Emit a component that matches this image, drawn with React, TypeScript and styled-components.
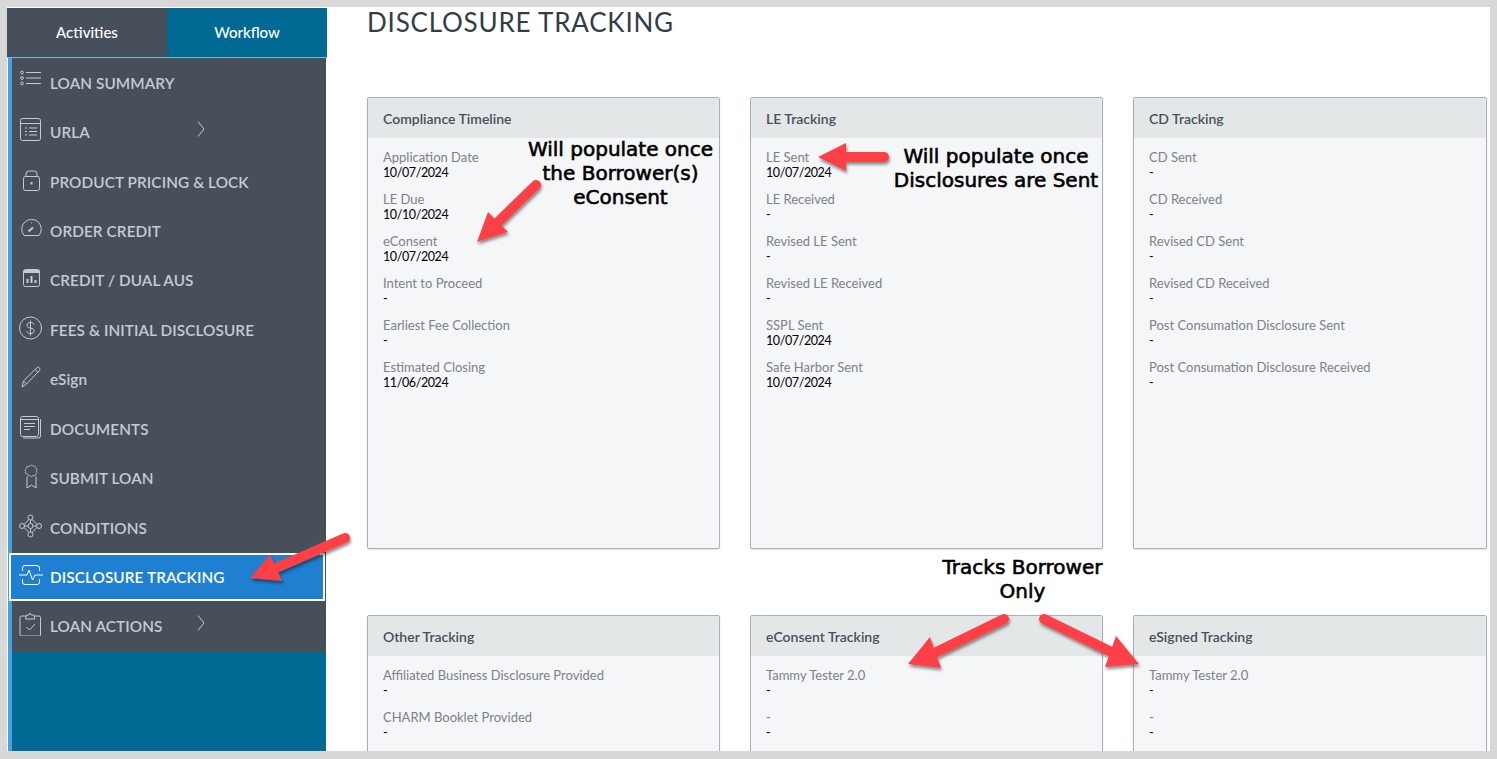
import styled, { createGlobalStyle } from 'styled-components';

// ------------------- Styled Components -------------------

const GlobalStyle = createGlobalStyle`
  html, body {
    margin: 0;
    padding: 0;
    height: 759px;
    overflow: hidden;
    background: #d8d8d8;
    font-family: "Lato", "Liberation Sans", sans-serif;
  }
`;

const Frame = styled.div`
  display: flex;
  width: 1483px;
  height: 744px;
  margin: 7px 7px 0 7px;
  background: #fff;
  overflow: hidden;
`;

const Sidebar = styled.aside`
  display: flex;
  flex-direction: column;
  flex: none;
  width: 320px;
  padding-top: 1px;
`;

const Tabs = styled.div`
  display: flex;
  flex: none;
  height: 49px;
  border-bottom: 1px solid #6cc0df;
`;

const Tab = styled.div<{ $active?: boolean }>`
  flex: 1;
  display: flex;
  align-items: center;
  justify-content: center;
  padding-bottom: 2px;
  color: #fff;
  font-size: 15px;
  font-weight: 500;
  background: ${({ $active }) => ($active ? '#006a94' : '#474f5b')};
`;

const NavWrap = styled.div`
  flex: 1;
  margin: 0 1px 0 1px;
  border-left: 4px solid #4a9fe0;
  background: #006a94;
`;

const Nav = styled.nav`
  display: flex;
  flex-direction: column;
  background: #474f5b;
  height: 594px;
`;

const NavItem = styled.div<{ $active?: boolean }>`
  display: flex;
  align-items: center;
  flex: none;
  box-sizing: border-box;
  height: ${({ $active }) => ($active ? '48px' : '49.45px')};
  padding-left: ${({ $active }) => ($active ? '8px' : '7px')};
  color: ${({ $active }) => ($active ? '#fff' : '#c6cbd1')};
  ${({ $active }) =>
    $active
      ? `
    margin: 0.5px 1px 0.5px -3px;
    background: #1f7fd0;
    border: 2px solid #fff;
  `
      : ''}
`;

const IconBox = styled.span`
  flex: none;
  width: 24px;
  height: 24px;
  margin-bottom: 4px;
  svg {
    display: block;
    width: 24px;
    height: 24px;
    fill: none;
    stroke: currentColor;
    stroke-width: 1;
  }
`;

const NavLabel = styled.span<{ $wide?: boolean }>`
  margin-left: 7px;
  font-size: 15.3px;
  font-weight: 600;
  letter-spacing: 0.1px;
  white-space: nowrap;
  width: ${({ $wide }) => ($wide ? '147px' : 'auto')};
`;

const Chevron = styled.svg`
  flex: none;
  width: 8px;
  height: 16px;
  margin-bottom: 7px;
  fill: none;
  stroke: #c6cbd1;
  stroke-width: 1;
`;

const Content = styled.main`
  flex: 1;
  padding: 0 3px 0 40px;
`;

const Title = styled.h1`
  margin: 0;
  height: 90px;
  font-size: 26px;
  line-height: 30px;
  font-weight: 400;
  letter-spacing: 0.8px;
  color: #333c47;
`;

const CardGrid = styled.div`
  display: grid;
  grid-template-columns: 353px 353px 354px;
  column-gap: 30px;
  row-gap: 66px;
`;

const Card = styled.section`
  box-sizing: border-box;
  height: 452px;
  background: #f5f6f8;
  border: 1px solid #aab0bb;
  border-radius: 2px;
  box-shadow: 0 1px 2px rgba(0, 0, 0, 0.12);
`;

const CardHeader = styled.header`
  display: flex;
  align-items: center;
  height: 40px;
  padding-left: 15px;
  background: #e4e7e8;
  color: #474f5b;
  font-size: 14px;
  font-weight: 600;
`;

const CardBody = styled.div`
  display: flex;
  flex-direction: column;
  gap: 10px;
  padding: 11px 15px;
`;

const Field = styled.div`
  font-size: 13px;
  line-height: 16px;
`;

const FieldLabel = styled.div`
  color: #7c8189;
`;

const FieldValue = styled.div`
  color: #000;
  font-size: 12.5px;
  letter-spacing: -0.4px;
`;

const ArrowLayer = styled.svg`
  position: absolute;
  left: 0;
  top: 0;
  width: 1497px;
  height: 759px;
  pointer-events: none;
`;

const Callout = styled.div<{ $left: number; $top: number; $width: number }>`
  position: absolute;
  left: ${({ $left }) => $left}px;
  top: ${({ $top }) => $top}px;
  width: ${({ $width }) => $width}px;
  color: #000;
  font-family: "DejaVu Sans", sans-serif;
  font-size: 20px;
  line-height: 24px;
  text-align: center;
  white-space: nowrap;
  -webkit-text-stroke: 0.6px #000;
`;

// ------------------- Icons -------------------

const icons: Record<string, React.ReactNode> = {
  list: (
    <>
      <circle cx="3" cy="3.500" r="1.400" />
      <circle cx="3" cy="9" r="1.400" />
      <circle cx="3" cy="14.500" r="1.400" />
      <path d="M7 3.500h15M7 9h15M7 14.500h15" />
    </>
  ),
  form: (
    <>
      <rect x="1.500" y="0.500" width="20" height="22" rx="2" />
      <path d="M1.500 5.500h20M6 10h2M10 10h8M6 13.500h2M10 13.500h8M6 17h2M10 17h8" />
    </>
  ),
  lock: (
    <>
      <rect x="4.500" y="8.500" width="16" height="14" rx="2" />
      <path d="M7 8.500V6a3 3 0 0 1 3-3h5a3 3 0 0 1 3 3v2.500" />
      <path d="M12.500 14v2.500" strokeWidth="2" />
    </>
  ),
  gauge: (
    <>
      <path d="M5 18.500a9.800 9.800 0 1 1 15 0z" />
      <path d="M9.500 14.500l4.500-4" strokeWidth="2" />
      <path d="M12.500 5.500v1" />
    </>
  ),
  chart: (
    <>
      <rect x="4.500" y="3.500" width="16" height="17" rx="2" />
      <path d="M4.500 5.500h16" strokeWidth="3" />
      <path d="M8.500 17v-4M12.500 17v-7M16.500 17v-3" strokeWidth="2" />
    </>
  ),
  dollar: (
    <>
      <circle cx="11.500" cy="12" r="11" />
      <path d="M15 8.500c-.5-1.500-2-2-3.500-2-2 0-3.500 1-3.500 2.800 0 3.800 7.200 1.800 7.200 5.600 0 1.700-1.600 2.700-3.700 2.700-1.700 0-3.200-.8-3.700-2.400M11.500 4.500v15" />
    </>
  ),
  pencil: (
    <>
      <path d="M3 22l1.500-6L17.500 3c1-1 2.500-1 3 0s.5 2-.5 3L7.500 19z" />
      <path d="M4.500 16l3 3M16 4.500l3 3" />
    </>
  ),
  docs: (
    <>
      <rect x="1.500" y="1.500" width="18" height="20" rx="2" />
      <path d="M21.500 4v17a2 2 0 0 1-2 2H4M1.500 4.500h18M5 8.500h11M5 11.500h11M5 14.500h6" />
    </>
  ),
  ribbon: (
    <>
      <path
        d="M12.500 1l2 1.500 2.500.2.800 2.300 1.700 1.800-.8 2.400.8 2.300-1.700 1.800-.8 2.300-2.500.2-2 1.500-2-1.500-2.500-.2-.8-2.300L4.500 12l.8-2.300-.8-2.400L6.200 5.500 7 3l2.500-.2z"
        transform="translate(2.500 .3) scale(.8 .72)"
      />
      <path d="M8 12.500V24l4.500-3 4.500 3V12.500" />
    </>
  ),
  network: (
    <>
      <circle cx="11.500" cy="3.500" r="2.500" />
      <circle cx="11.500" cy="20.500" r="2.500" />
      <circle cx="3" cy="12" r="2.500" />
      <circle cx="20" cy="12" r="2.500" />
      <circle cx="11.500" cy="12" r="2.500" />
      <path d="M10 5.500L5 10.500M13 5.500l5 5M5 13.500l5 5M18 13.500l-5 5M5.500 12H9M14 12h3.500M11.500 6v3.500M11.500 14.500V18" />
    </>
  ),
  pulse: (
    <>
      <path d="M3.500 8V5a2.500 2.500 0 0 1 2.500-2.500h12A2.500 2.500 0 0 1 20.500 5v3M3.500 16v3A2.500 2.500 0 0 0 6 21.500h12a2.500 2.500 0 0 0 2.500-2.500v-3" />
      <path d="M0 12h8l2-5 3.500 10 2.500-5h8" />
    </>
  ),
  clipboard: (
    <>
      <path d="M7 4H2.500A1.500 1.500 0 0 0 1 5.500V23a1 1 0 0 0 1 1h18.500a1 1 0 0 0 1-1V5.500A1.500 1.500 0 0 0 20 4h-4.500" />
      <path d="M6.500 7l1-4H10l1.200-2 1.200 2h2.500l1 4z" />
      <path d="M7.500 15l3 3 5.500-6" />
    </>
  ),
};

// ------------------- Data -------------------

type NavEntry = { icon: string; label: string; chevron?: boolean; active?: boolean };

const navItems: NavEntry[] = [
  { icon: 'list', label: 'LOAN SUMMARY' },
  { icon: 'form', label: 'URLA', chevron: true },
  { icon: 'lock', label: 'PRODUCT PRICING & LOCK' },
  { icon: 'gauge', label: 'ORDER CREDIT' },
  { icon: 'chart', label: 'CREDIT / DUAL AUS' },
  { icon: 'dollar', label: 'FEES & INITIAL DISCLOSURE' },
  { icon: 'pencil', label: 'eSign' },
  { icon: 'docs', label: 'DOCUMENTS' },
  { icon: 'ribbon', label: 'SUBMIT LOAN' },
  { icon: 'network', label: 'CONDITIONS' },
  { icon: 'pulse', label: 'DISCLOSURE TRACKING', active: true },
  { icon: 'clipboard', label: 'LOAN ACTIONS', chevron: true },
];

const cards: { title: string; fields: [string, string][] }[] = [
  {
    title: 'Compliance Timeline',
    fields: [
      ['Application Date', '10/07/2024'],
      ['LE Due', '10/10/2024'],
      ['eConsent', '10/07/2024'],
      ['Intent to Proceed', '-'],
      ['Earliest Fee Collection', '-'],
      ['Estimated Closing', '11/06/2024'],
    ],
  },
  {
    title: 'LE Tracking',
    fields: [
      ['LE Sent', '10/07/2024'],
      ['LE Received', '-'],
      ['Revised LE Sent', '-'],
      ['Revised LE Received', '-'],
      ['SSPL Sent', '10/07/2024'],
      ['Safe Harbor Sent', '10/07/2024'],
    ],
  },
  {
    title: 'CD Tracking',
    fields: [
      ['CD Sent', '-'],
      ['CD Received', '-'],
      ['Revised CD Sent', '-'],
      ['Revised CD Received', '-'],
      ['Post Consumation Disclosure Sent', '-'],
      ['Post Consumation Disclosure Received', '-'],
    ],
  },
  {
    title: 'Other Tracking',
    fields: [
      ['Affiliated Business Disclosure Provided', '-'],
      ['CHARM Booklet Provided', '-'],
    ],
  },
  {
    title: 'eConsent Tracking',
    fields: [
      ['Tammy Tester 2.0', '-'],
      ['-', '-'],
    ],
  },
  {
    title: 'eSigned Tracking',
    fields: [
      ['Tammy Tester 2.0', '-'],
      ['-', '-'],
    ],
  },
];

// tail x/y, tip x/y, the two wings of the head
const arrows = [
  { tail: [536, 185], tip: [477, 242], a: [488, 212], b: [508, 232] },
  { tail: [884, 157], tip: [818, 157], a: [846, 143], b: [846, 171] },
  { tail: [345, 538], tip: [250, 578], a: [270, 555], b: [282, 581] },
  { tail: [1004, 619], tip: [908, 664], a: [930, 637], b: [941, 668] },
  { tail: [1044, 619], tip: [1139, 664], a: [1116, 636], b: [1105, 667] },
];

// ------------------- App -------------------

export default function App() {
  return (
    <>
      <GlobalStyle />
      <Frame>
        <Sidebar>
          <Tabs>
            <Tab>Activities</Tab>
            <Tab $active>Workflow</Tab>
          </Tabs>
          <NavWrap>
            <Nav>
              {navItems.map(item => (
                <NavItem key={item.label} $active={item.active}>
                  <IconBox>
                    <svg viewBox="0 0 24 24">{icons[item.icon]}</svg>
                  </IconBox>
                  <NavLabel $wide={item.chevron}>{item.label}</NavLabel>
                  {item.chevron && (
                    <Chevron viewBox="0 0 8 16">
                      <path d="M1 .5L7 8l-6 7.500" />
                    </Chevron>
                  )}
                </NavItem>
              ))}
            </Nav>
          </NavWrap>
        </Sidebar>
        <Content>
          <Title>DISCLOSURE TRACKING</Title>
          <CardGrid>
            {cards.map(card => (
              <Card key={card.title}>
                <CardHeader>{card.title}</CardHeader>
                <CardBody>
                  {card.fields.map(([label, value], i) => (
                    <Field key={i}>
                      <FieldLabel>{label}</FieldLabel>
                      <FieldValue>{value}</FieldValue>
                    </Field>
                  ))}
                </CardBody>
              </Card>
            ))}
          </CardGrid>
        </Content>
      </Frame>
      <ArrowLayer viewBox="0 0 1497 759">
        <defs>
          <filter id="arrow-shadow" x="-30%" y="-30%" width="160%" height="160%">
            <feDropShadow dx="1" dy="2.500" stdDeviation="1.800" floodColor="#000" floodOpacity="0.45" />
          </filter>
        </defs>
        {arrows.map((arrow, i) => {
          const neck = [(arrow.a[0] + arrow.b[0]) / 2, (arrow.a[1] + arrow.b[1]) / 2];
          return (
            <g key={i} filter="url(#arrow-shadow)">
              <line
                x1={arrow.tail[0]}
                y1={arrow.tail[1]}
                x2={neck[0]}
                y2={neck[1]}
                stroke="#fd4044"
                strokeWidth="10"
                strokeLinecap="round"
              />
              <polygon points={`${arrow.tip} ${arrow.a} ${arrow.b}`} fill="#fd4044" />
            </g>
          );
        })}
      </ArrowLayer>
      <Callout $left={520} $top={137} $width={201}>
        Will populate once
        <br />
        the Borrower(s)
        <br />
        eConsent
      </Callout>
      <Callout $left={890} $top={144} $width={212}>
        Will populate once
        <br />
        Disclosures are Sent
      </Callout>
      <Callout $left={920} $top={555} $width={205}>
        Tracks Borrower
        <br />
        Only
      </Callout>
    </>
  );
}
